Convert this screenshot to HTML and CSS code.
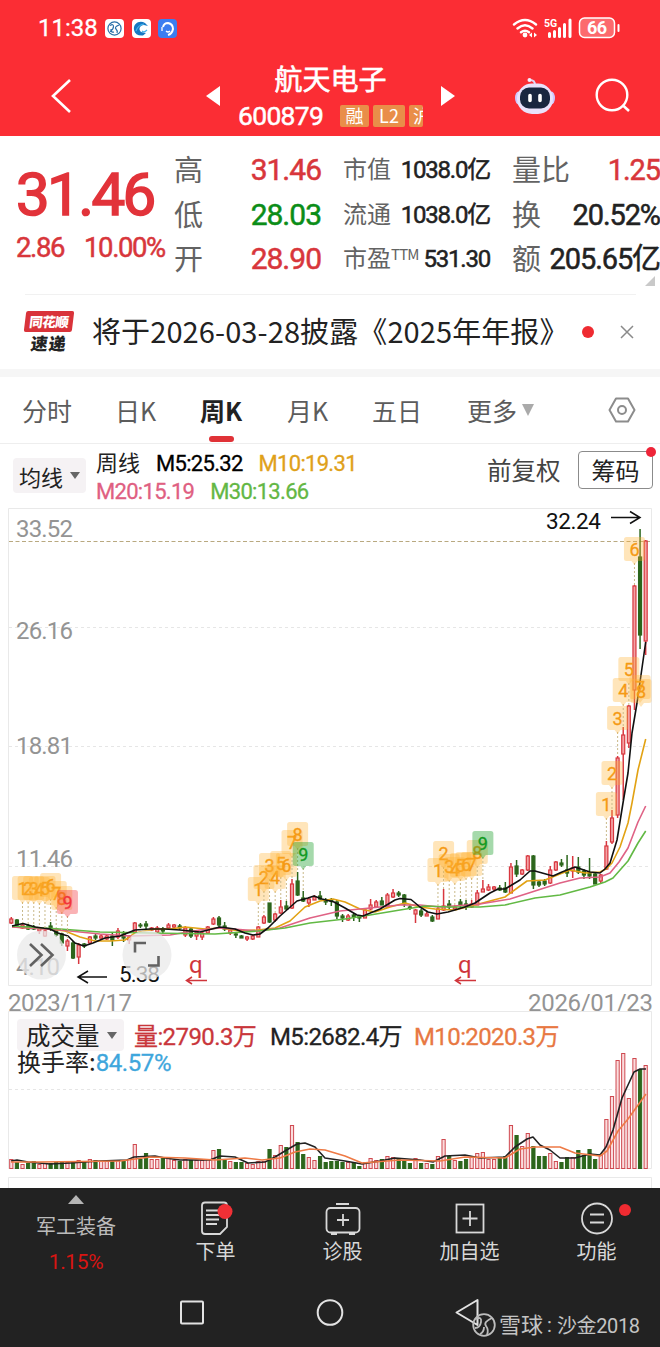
FILE: index.html
```html
<!DOCTYPE html>
<html lang="zh-CN">
<head>
  <meta charset="UTF-8" />
  <meta name="viewport" content="width=device-width, initial-scale=1.0"/>
  <title>航天电子 600879</title>
  <link rel="stylesheet" href="styles.css">
</head>
<body>
  <header class="top">
    <div class="status">
      <span class="clock">11:38</span>
      <svg class="app" viewBox="0 0 19 19"><rect width="19" height="19" rx="4" fill="#fff"/><g fill="none" stroke="#286fa8" stroke-width="1.2"><circle cx="9.5" cy="9.5" r="6.6"/><path d="M5 6.500q3.500-2 3.500 1t-3.500 5M14 6q-5 2-3 4t1 4M9 13q-3 1-3-3"/></g></svg>
      <svg class="app" viewBox="0 0 19 19"><rect width="19" height="19" rx="4" fill="#fff"/><path d="M2 11C1 4 8 1 13 4l3 3-4-1c-4 0-6 4-3 7l5 1-3 2.500C6 17 3 15 2 11z" fill="#1778c2"/><path d="M4 12q2-6 8-7M10 12q2 2 5-1" fill="none" stroke="#45b4ec" stroke-width="1.200"/></svg>
      <svg class="app" viewBox="0 0 19 19"><rect width="19" height="19" rx="4" fill="#3c7df0"/><path d="M5 8q1-4 5-4 5 1 5 6-1 5-5 6" fill="none" stroke="#fff" stroke-width="2"/><path d="M4 8v4M8 12q2 2 4 0" fill="none" stroke="#fff" stroke-width="1.300"/></svg>
      <svg class="signals" viewBox="0 0 110 24">
        <g fill="none" stroke="#fff" stroke-width="2.400" stroke-linecap="round"><path d="M2 8.500Q13-.5 24 8.500M5.500 12.500Q13 6 20.500 12.500M9 16.200q4-3 8 0"/></g>
        <circle cx="13" cy="19" r="2.400" fill="#fff"/>
        <path d="M20 16.500v5l-3-2.500zM22 16.500v5l3-2.500z" fill="#fff"/>
        <text x="32" y="10.500" class="net">5G</text>
        <path d="M37.500 20.500v-3M42.500 20.500v-5M47.500 20.500v-8M52.500 20.500V8.500M58 20.500V4" stroke="#fff" stroke-width="3" stroke-linecap="round"/>
        <rect x="67.500" y="2" width="35" height="19.500" rx="5" fill="#fc6a6e" stroke="#fff" stroke-width="1.500"/>
        <path d="M106.500 9v6" stroke="#fff" stroke-width="2" stroke-linecap="round"/>
        <text x="75" y="18" class="level" textLength="20">66</text>
      </svg>
    </div>
    <div class="nav">
      <svg class="back" viewBox="0 0 22 36"><path d="M20 2L3 18l17 16" fill="none" stroke="#fff" stroke-width="2.600"/></svg>
      <i class="prev"></i>
      <div class="stock">
        <h1>航天电子</h1>
        <div class="code-row">
          <span class="code num">600879</span>
          <span class="tag">融</span><span class="tag l2">L2</span><span class="tag cut">沪</span>
        </div>
      </div>
      <i class="next"></i>
      <svg class="robot" viewBox="0 0 42 38">
        <path d="M21 8q0-5-5-5" fill="none" stroke="#ddd6f5" stroke-width="2"/><circle cx="15.500" cy="3" r="2" fill="#f5eeff"/>
        <ellipse cx="4.500" cy="21" rx="3.500" ry="6.500" fill="#cfc6ff"/><ellipse cx="37.500" cy="21" rx="3.500" ry="6.500" fill="#cfc6ff"/>
        <rect x="3" y="6.500" width="36" height="30.500" rx="15" fill="#e9e2fb"/>
        <rect x="6" y="10.500" width="30" height="21" rx="9" fill="#19263f"/>
        <path d="M16 18.500v5M26 18.500v5" stroke="#fff" stroke-width="3.600" stroke-linecap="round"/>
      </svg>
      <svg class="search" viewBox="0 0 36 36"><circle cx="17" cy="17" r="15.300" fill="none" stroke="#fff" stroke-width="2.400"/><path d="M27.500 27l6.500 6" stroke="#fff" stroke-width="2.600"/></svg>
    </div>
  </header>

  <section class="quote">
    <div class="price up">
      <div class="last num">31.46</div>
      <div class="change num"><span>2.86</span><span>10.00%</span></div>
    </div>
    <dl class="col range">
      <div><dt>高</dt><dd class="num up">31.46</dd></div>
      <div><dt>低</dt><dd class="num down">28.03</dd></div>
      <div><dt>开</dt><dd class="num up">28.90</dd></div>
    </dl>
    <dl class="col cap">
      <div><dt>市值</dt><dd class="num">1038.0亿</dd></div>
      <div><dt>流通</dt><dd class="num">1038.0亿</dd></div>
      <div><dt>市盈<sup>TTM</sup></dt><dd class="num">531.30</dd></div>
    </dl>
    <dl class="col deal">
      <div><dt>量比</dt><dd class="num up">1.25</dd></div>
      <div><dt>换</dt><dd class="num">20.52%</dd></div>
      <div><dt>额</dt><dd class="num">205.65亿</dd></div>
    </dl>
    <i class="corner"></i>
  </section>

  <section class="notice">
    <div class="express"><b>同花顺</b><em>速递</em></div>
    <p>将于2026-03-28披露《2025年年报》</p>
    <i class="dot"></i>
    <svg class="close" viewBox="0 0 14 14"><path d="M1 1l12 12M13 1L1 13" stroke="#8a8a8a" stroke-width="1.500"/></svg>
  </section>

  <nav class="tabs">
    <span class="t1">分时</span>
    <span class="t2">日K</span>
    <span class="t3 active">周K</span>
    <span class="t4">月K</span>
    <span class="t5">五日</span>
    <span class="t6">更多<i class="caret light"></i></span>
    <svg class="gear" viewBox="0 0 28 28"><path d="M8 2.500h12L26.500 14 20 25.500H8L1.500 14z" fill="none" stroke="#8c8c8c" stroke-width="2" stroke-linejoin="round"/><circle cx="14" cy="14" r="4" fill="none" stroke="#8c8c8c" stroke-width="2"/></svg>
  </nav>

  <section class="ma">
    <div class="picker">均线<i class="caret"></i></div>
    <div class="ma-list">
      <div><span class="period">周线</span><span class="m5">M5:25.32</span><span class="m10">M10:19.31</span></div>
      <div><span class="m20">M20:15.19</span><span class="m30">M30:13.66</span></div>
    </div>
    <span class="adjust">前复权</span>
    <div class="chips">筹码</div>
  </section>

  <svg class="kline" viewBox="0 508 660 504">
    <path class="frame" d="M8.500 508.500h643v477H8.500z"/>
    <path class="grid" d="M9 627.500h642M9 746.500h642M9 866.500h642"/>
    <path class="now" d="M9 541.500h642"/>
    <g class="axis">
      <text x="16" y="537" textLength="57">33.52</text>
      <text x="16" y="639" textLength="57">26.16</text>
      <text x="16" y="753.500" textLength="57">18.81</text>
      <text x="16" y="867" textLength="57">11.46</text>
      <text x="16" y="974.500" textLength="44">4.10</text>
      <text x="8" y="1011" textLength="124">2023/11/17</text>
      <text x="528" y="1011" textLength="125">2026/01/23</text>
    </g>
    <g id="candles"></g>
    <g id="lines" class="lines"></g>
    <g id="badges"></g>
    <g class="mark">
      <text x="546" y="529" textLength="55">32.24</text>
      <path d="M611 517.500h29M630 511.500l10 6-10 6"/>
      <text x="119" y="982" textLength="41">5.38</text>
      <path d="M107 977H78M88 971l-10 6 10 6"/>
    </g>
    <g class="ex">
      <text x="189" y="973">q</text><path d="M207 980.500h-20M192 977l-5.500 3.500 5.500 3.500"/>
      <text x="458" y="973">q</text><path d="M476 980.500h-20M461 977l-5.500 3.500 5.500 3.500"/>
    </g>
    <circle class="float" cx="41.500" cy="955" r="24.500"/>
    <circle class="float" cx="147" cy="955" r="24.500"/>
    <path class="float-icon" d="M30 944l11.500 11L30 966M41 944l11.500 11L41 966"/>
    <path class="float-icon" d="M135 952.500v-9.500h11M158.500 956v9.500h-10.500"/>
  </svg>

  <section class="volume">
    <div class="vol-head">
      <div class="vol-row"><span class="picker wide">成交量<i class="caret"></i></span><span class="v1">量:2790.3万</span><span class="v2">M5:2682.4万</span><span class="v3">M10:2020.3万</span></div>
      <div class="turnover">换手率:<span>84.57%</span></div>
    </div>
    <svg class="vol-chart" viewBox="0 1011 660 177">
      <path class="frame" d="M8.500 1011.500h643v157H8.500zM8.500 1188v-10.500h643v10.500"/>
      <path class="grid" d="M9 1089.500h642"/>
      <g id="bars"></g>
      <g id="volLines" class="lines"></g>
    </svg>
  </section>

  <footer class="bottom">
    <div class="actions">
      <div class="item sector"><i class="tri-up"></i><span>军工装备</span><b>1.15%</b></div>
      <div class="item i2">
        <svg viewBox="0 0 36 36"><path d="M7 2.500h19q3 0 3 3V27l-7 7H7q-3 0-3-3V5.500q0-3 3-3z"/><path d="M8 10.500h12M8 15h13M8 19.500h13M8 24h11"/><circle class="red" cx="27" cy="11.500" r="7.500"/></svg>
        <span>下单</span>
      </div>
      <div class="item i3">
        <svg viewBox="0 0 36 36"><rect x="1.500" y="8" width="33" height="24.500" rx="4"/><path d="M11 4h13M18 14v12M12 20h12M6 34h6M24 34h6"/></svg>
        <span>诊股</span>
      </div>
      <div class="item i4">
        <svg viewBox="0 0 36 36"><rect x="4.500" y="4.500" width="27" height="28"/><path d="M18 11v15M10.500 18.500h15"/></svg>
        <span>加自选</span>
      </div>
      <div class="item i5">
        <svg viewBox="0 0 36 36"><circle cx="18" cy="18.500" r="15"/><path d="M11 14.500h14M11 22.500h14"/></svg>
        <span>功能</span>
        <i class="dot"></i>
      </div>
    </div>
    <div class="keys">
      <svg viewBox="0 0 660 50">
        <g fill="none" stroke="#e2e2e2" stroke-width="2"><rect x="181" y="13.500" width="22" height="22" rx="1"/><circle cx="330" cy="24.500" r="12.300"/><path d="M477.500 12v25L456.500 24.500z" stroke-linejoin="round"/></g>
        <g fill="none" stroke="#bdbdbd" stroke-width="1.800"><circle cx="484" cy="37" r="10.800"/><path d="M476 31q6-3 5 3t-6 6M492 30q-9 4-6 8t1 9M480 46q4-2 4-7"/></g>
        <text x="499" y="45" class="mark-text big">雪球</text>
        <text x="547" y="44" class="mark-text">:</text>
        <text x="557" y="45" class="mark-text" textLength="83">沙金2018</text>
      </svg>
    </div>
  </footer>

  <script src="chart.js"></script>
</body>
</html>
```
FILE: chart.js
```js
const STEP = 5.614;
const X0 = 11.3;
const RED = '#d8373f';
const GREEN = '#2c661c';

// colour, high, body top, body bottom, low
const candles = [
  ['r',917,919,923,924],['g',919,920,925,926],['r',923,925,928,929],['g',924,926,929,930],['g',925,927,929,930],
  ['r',927,928,931,934],['r',928,931,936,937],['g',922,926,929,931],['g',928,929,935,937],['g',933,934,943,946],
  ['r',939,941,946,951],['g',941,943,958,959],['r',943,945,957,964],['g',943,944,946,948],['r',936,937,943,944],
  ['g',934,936,938,940],['r',934,936,938,939],['r',935,936,939,940],['g',933,936,940,946],['r',928,931,937,939],
  ['g',931,934,938,942],['r',935,937,940,944],['r',922,923,932,933],['g',923,925,926,928],['g',921,924,926,929],
  ['r',927,928,930,931],['r',926,928,932,934],['g',927,929,931,934],['r',923,925,928,929],['r',924,925,927,928],
  ['g',924,926,928,930],['r',926,928,935,937],['g',927,929,936,938],['r',930,932,936,940],['r',931,933,937,940],
  ['r',926,927,933,934],['r',917,919,924,925],['g',916,918,925,927],['g',922,926,929,931],
  ['r',928,930,933,935],['g',932,934,935,938],['g',935,936,938,938],['r',936,937,939,941],['r',935,936,939,940],
  ['r',926,927,937,937],['r',915,917,923,924],['g',903,903,922,923],['r',913,914,920,922],['r',900,907,913,914],
  ['g',901,906,909,910],['r',879,884,908,909],['g',872,881,895,896],['g',891,898,901,902],['r',898,899,903,907],
  ['r',895,897,900,900],['g',891,896,899,900],['g',898,900,902,905],['g',898,900,901,906],['g',900,902,916,919],
  ['g',914,916,918,922],['r',914,916,920,921],['g',913,915,917,921],['g',915,916,918,922],['r',909,910,918,918],
  ['r',899,905,909,910],['r',900,902,907,908],['g',897,901,905,905],['r',893,895,907,907],['r',889,893,897,898],
  ['g',891,893,895,897],['g',894,895,904,907],['g',905,907,908,910],['r',909,910,914,923],['g',909,911,915,917],
  ['r',912,914,916,916],['g',915,917,921,922],
  ['r',907,909,919,919],['r',889,906,910,911],['g',900,904,907,909],['r',905,907,909,910],['g',899,902,905,908],
  ['g',900,904,907,910],['r',900,904,907,908],['r',890,893,905,905],['r',880,889,892,892],['r',884,887,890,891],
  ['r',886,887,889,891],['g',885,888,890,891],['g',882,888,892,893],['r',863,867,893,893],['g',860,866,874,877],
  ['r',869,870,874,875],['r',855,856,870,871],['g',855,856,885,889],['g',880,882,885,887],['g',879,881,884,886],
  ['r',866,870,883,884],['r',861,862,870,871],['g',859,863,865,867],['g',855,870,873,877],['r',856,868,871,878],
  ['g',857,867,872,874],['g',869,871,875,879],['g',858,873,876,879],['g',872,874,884,884],
  ['r',874,875,881,883],['r',841,846,869,870],['r',810,818,842,844],['r',756,758,815,818],['r',727,735,754,800],
  ['r',705,706,743,748],['r',585,586,690,710],['g',529,557,635,649],['r',540,541,641,655]
];

// bar heights
const volumes = [
  9,6,4,5,7,4,5,5,6,6,6,7,8,6,9,8,7,7,7,8,8,9,24,9,15,9,9,11,11,8,7,9,8,8,8,9,18,19,8,7,6,6,5,4,7,7,19,13,23,21,43,26,
  14,11,8,12,6,7,7,6,6,5,2,6,10,8,9,12,11,9,8,5,10,5,5,4,12,29,12,8,7,9,11,15,16,9,9,10,12,43,33,22,35,22,12,12,15,
  7,6,11,11,18,13,19,9,13,49,72,108,115,70,110,99,103
];

const maLines = [
  ['#e2a213', '12,927 50,929 65,931 80,937 95,941 110,941 125,940 135,933 155,929 170,929 185,927 205,929 220,928 240,931 258,930 275,928 290,921 305,907 320,901 333,899 345,902 360,909 375,912 390,907 405,903 420,907 435,909 455,910 475,905 490,901 505,897 527,881 545,880 570,870 585,873 600,872 606,869 612,863 620,847 628,823 632,803 638,770 645.7,739'],
  ['#df6285', '12,927 60,930 100,934 130,936 170,935 200,930 220,928 258,931 280,928 310,918 340,911 370,908 400,905 420,905 440,907 480,904 510,899 535,891 560,883 580,878 600,877 610,873 619,862 628,848 638,822 645.7,806'],
  ['#62b944', '12,926 60,929 100,932 150,933 215,934 258,931 285,928 310,923 345,919 370,915 400,910 425,906 450,907 480,907 505,905 535,898 560,895 590,887 605,882 613,878 628,861 638,843 645.7,831'],
  ['#111', '12,926 23,923.5 35,927 50,929 58,933 68,936 75,943 84,946 93,943 105,938 120,936 135,930 150,929 165,929 180,930 200,932 220,927 235,929 245,933 253,935 260,934 268,928 280,916 297,901 308,898 314,896 322,899 334,902 345,908 357,915 363,916 380,909 395,900 400,898.5 411,899.5 420,907 428,912 437,914 448,912 465,907 475,903 490,893 498,889 505,889 520,880 530,871 535,871 553,876 562,872 575,867 590,872 600,873 605,869 610,863 617,840 623,803 628,773 632,733 637,703 645.7,642']
];

const volMa = [
  ['#222', '11,1161 17,1160 28,1162 50,1164 70,1163 100,1161 127,1160 134,1157 155,1156 165,1158 180,1160 210,1160 220,1156 235,1157 248,1163 265,1162 275,1157 290,1148 297,1144 305,1143 315,1147 325,1158 345,1161 362,1164 380,1161 395,1158 420,1160 433,1162 445,1156 465,1155 480,1158 505,1157 515,1147 527,1139 533,1137 540,1145 550,1150 560,1158 575,1158 590,1154 600,1155 606,1147 613,1130 622,1098 634,1072 640,1069 646,1069'],
  ['#ee7a45', '11,1162 40,1162 120,1161 150,1157 185,1158 215,1160 245,1158 262,1160 280,1158 295,1152 310,1149 325,1150 345,1156 362,1163 400,1160 440,1161 465,1157 505,1158 520,1149 535,1147 560,1147 575,1153 600,1156 607,1151 618,1131 628,1119 646,1094']
];

// nine-turn markers: first candle, centre of each number, colour of the ninth
const turns = [
  [2, [888,888,888,889,888,885,893,898,902], '#f2343c'],
  [44, [889,877,865,877,863,865,842,834,854], '#129a22'],
  [76, [870,853,866,869,865,864,864,852,843], '#129a22'],
  [106, [804,773,718,690,669,549,687,691], '']
];

const cx = i => X0 + STEP * i;

document.getElementById('candles').innerHTML = candles.map(([c, hi, top, bot, lo], i) => {
  const x = cx(i);
  const color = c === 'r' ? RED : GREEN;
  const fill = c === 'r' ? '#f3a2a5' : GREEN;
  return `<path d="M${x} ${hi}V${lo}" stroke="${color}" stroke-width="1.5"/>` +
    `<rect x="${x - 1.5}" y="${top}" width="3" height="${bot - top}" fill="${fill}" stroke="${color}" stroke-width="1.2"/>`;
}).join('');

document.getElementById('bars').innerHTML = volumes.map((h, i) => {
  const red = candles[i][0] === 'r';
  return `<rect x="${cx(i) - 1.6}" y="${1168.5 - h}" width="3.2" height="${h}" fill="${red ? '#fbdcdd' : GREEN}" stroke="${red ? '#cf4950' : GREEN}" stroke-width="1"/>`;
}).join('');

const draw = list => list.map(([c, p]) => `<polyline points="${p}" stroke="${c}"/>`).join('');
document.getElementById('lines').innerHTML = draw(maLines);
document.getElementById('volLines').innerHTML = draw(volMa);

let badges = '';
turns.forEach(([start, ys, last]) => ys.forEach((y, n) => {
  // the newest marker is kept inside the frame
  const x = Math.min(cx(start + n), 641);
  const color = n === 8 ? last : '#f59a14';
  const bg = n === 8 ? last : '#ffb236';
  const end = candles[start + n][1];
  if (end > y + 14) badges += `<path class="stem" d="M${x} ${y + 14}V${end}"/>`;
  badges += `<path d="M${x - 8} ${y - 12}h16q2.500 0 2.500 2.500v19q0 2.500-2.500 2.500h-5l-3 4-3-4h-5q-2.500 0-2.500-2.500v-19q0-2.500 2.500-2.500z" fill="${bg}" opacity="${n === 8 ? 0.38 : 0.34}"/>` +
    `<text class="digit" x="${x}" y="${y + 6.5}" fill="${color}" stroke="${color}">${n + 1}</text>`;
}));
document.getElementById('badges').innerHTML = badges;
```
FILE: styles.css
```css
* {
  box-sizing: border-box;
}

body {
  margin: 0;
  width: 660px;
  background: #fff;
  color: #222;
  font-family: "Noto Sans CJK SC", "Noto Sans", sans-serif;
}

svg {
  display: block;
  flex: none;
}

i, em {
  font-style: normal;
}

.num, .clock, .ma-list, .turnover span, .v1, .v2, .v3, .sector b, svg text {
  font-family: Roboto, "Noto Sans CJK SC", sans-serif;
}

.num {
  -webkit-text-stroke: 0.5px currentColor;
}

.up {
  color: #d8363b;
}

.down {
  color: #0b8d17;
}

/* header */
.top {
  height: 136px;
  background: #fb2d34;
  color: #fff;
}

.status {
  display: flex;
  align-items: center;
  height: 56px;
  padding-left: 38px;
}

.clock {
  width: 67px;
  font-size: 24px;
  line-height: 30px;
  -webkit-text-stroke: 0.3px #fff;
}

.app {
  width: 19px;
  height: 19px;
  margin-right: 7.5px;
}

.signals {
  width: 110px;
  height: 24px;
  margin-left: 327px;
}

.net {
  fill: #fff;
  font-size: 10.5px;
  font-weight: bold;
}

.level {
  fill: #fff;
  font-size: 18px;
  font-weight: bold;
}

.nav {
  display: flex;
  align-items: center;
  height: 80px;
  padding-left: 50px;
}

.back {
  width: 22px;
  height: 36px;
}

.prev, .next {
  border: 10px solid transparent;
}

.prev {
  border-right: 14px solid #fff;
  border-left: 0;
  margin-left: 134px;
}

.next {
  border-left: 14px solid #fff;
  border-right: 0;
  margin-left: 18px;
}

.stock {
  width: 185px;
  margin: 1px 0 0 18px;
}

h1 {
  margin: 0;
  font-size: 28px;
  font-weight: 400;
  line-height: 39px;
  text-align: center;
  -webkit-text-stroke: 0.6px #fff;
}

.code-row {
  display: flex;
  align-items: center;
  height: 36px;
}

.code {
  width: 102px;
  font-size: 26.5px;
  line-height: 30px;
  letter-spacing: -0.7px;
}

.tag {
  width: 29px;
  height: 22px;
  margin-right: 4px;
  border-radius: 2px;
  background: #e98e49;
  font-size: 18px;
  line-height: 20px;
  text-align: center;
  overflow: hidden;
}

.l2 {
  width: 32px;
}

.cut {
  width: 14px;
  margin-right: 0;
  padding-left: 4px;
  text-align: left;
}

.robot {
  width: 42px;
  height: 38px;
  margin-left: 59px;
}

.search {
  width: 36px;
  height: 36px;
  margin-left: 39px;
}

/* quote */
.quote {
  display: flex;
  position: relative;
  height: 158px;
  padding-top: 11px;
}

.price {
  width: 174px;
  padding-left: 16px;
}

.last {
  height: 84px;
  color: #e2333a;
  font-size: 60px;
  line-height: 95px;
  letter-spacing: -2.6px;
  -webkit-text-stroke-width: 1.6px;
}

.change {
  display: flex;
  gap: 20px;
  margin-top: 1px;
  font-size: 27.5px;
  line-height: 31px;
  letter-spacing: -1.4px;
}

.col {
  margin: 0;
  line-height: 44.5px;
  white-space: nowrap;
}

.col div {
  display: flex;
  justify-content: space-between;
  height: 44.5px;
}

.col dt {
  color: #636363;
  font-size: 29px;
  margin-top: -1px;
}

.col dd {
  margin: 1px 0 0;
  font-size: 30px;
  letter-spacing: -1px;
}

.range {
  width: 147px;
}

.cap {
  width: 147px;
  margin-left: 22px;
}

.cap dt {
  font-size: 24px;
}

.cap dd {
  font-size: 24px;
  letter-spacing: -1.2px;
}

.cap sup {
  font-size: 15px;
  line-height: 0;
  vertical-align: 7px;
  letter-spacing: -0.8px;
}

.deal {
  width: 148px;
  margin-left: 22px;
}

.deal dd {
  font-size: 29px;
  letter-spacing: -1.1px;
}

.corner {
  position: absolute;
  right: 5px;
  top: 140px;
  border-left: 10px solid transparent;
  border-bottom: 10px solid #c9c9c9;
}

/* notice */
.notice {
  display: flex;
  align-items: center;
  height: 83px;
  padding-left: 25px;
  border-bottom: 8px solid #f6f6f6;
  background: linear-gradient(#f1f1f1, #f1f1f1) 25px 0 / 611px 1px no-repeat;
}

.express {
  width: 67px;
}

.express b, .express em {
  display: block;
  width: 48px;
  text-align: center;
  transform: skewX(-7deg);
}

.express b {
  height: 21px;
  border-radius: 2px;
  background: #d9333a;
  color: #fff;
  font-size: 13.5px;
  line-height: 20px;
  font-weight: 900;
  letter-spacing: -0.5px;
}

.express em {
  height: 20px;
  font-size: 17px;
  font-weight: 900;
  line-height: 21px;
  letter-spacing: 1px;
}

.notice p {
  margin: -3px 0 0;
  width: 490px;
  font-size: 29px;
  line-height: 40px;
  letter-spacing: 0.1px;
  white-space: nowrap;
}

.dot {
  width: 12px;
  height: 12px;
  border-radius: 50%;
  background: #ef2b31;
}

.close {
  width: 14px;
  height: 14px;
  margin-left: 26px;
}

/* tabs */
.tabs {
  display: flex;
  align-items: center;
  height: 67px;
  padding-left: 22px;
  border-bottom: 1px solid #eee;
  color: #5c5c5c;
  font-size: 25px;
  line-height: 66px;
}

.tabs span {
  height: 66px;
}

.t1 { width: 93px; }
.t2 { width: 85px; }
.t3 { width: 87px; }
.t4 { width: 85px; }
.t5 { width: 95px; }

.t6 {
  display: flex;
  align-items: center;
  width: 141px;
}

.active {
  color: #222;
  font-weight: bold;
}

.active::after {
  content: "";
  display: block;
  width: 25px;
  height: 6px;
  margin: -7px 0 0 9px;
  border-radius: 3px;
  background: #e03237;
}

.gear {
  width: 28px;
  height: 28px;
}

.caret {
  display: inline-block;
  margin-left: 7px;
  border: 5px solid transparent;
  border-top: 7px solid #666;
  border-bottom: 0;
}

.light {
  border-width: 12px 6px 0;
  border-top-color: #aaa;
  margin-left: 5px;
}

/* moving averages */
.ma {
  display: flex;
  height: 64px;
  padding-left: 13px;
}

.picker {
  display: flex;
  align-items: center;
  width: 73px;
  height: 35px;
  margin-top: 14px;
  padding-left: 6px;
  border-radius: 4px;
  background: #f5f2f4;
  font-size: 22px;
  line-height: 30px;
}

.ma-list {
  width: 392px;
  padding: 6px 0 0 10px;
  font-size: 22px;
  line-height: 28px;
  letter-spacing: -0.7px;
  -webkit-text-stroke: 0.3px currentColor;
}

.ma-list span {
  margin-right: 16px;
}

.m5 { color: #000; }
.m10 { color: #dfa11a; }
.m20 { color: #df5f82; }
.m30 { color: #63b744; }

.ma-list .period {
  letter-spacing: 0;
  -webkit-text-stroke: 0;
}

.adjust {
  width: 100px;
  padding-left: 9px;
  color: #444;
  font-size: 24.5px;
  line-height: 51px;
}

.chips {
  position: relative;
  width: 75px;
  height: 38px;
  margin-top: 7px;
  border: 1px solid #8b8b8b;
  border-radius: 4px;
  font-size: 24px;
  line-height: 35px;
  text-align: center;
}

.chips::after {
  content: "";
  position: absolute;
  top: -5px;
  right: -4px;
  width: 10px;
  height: 10px;
  border-radius: 50%;
  background: #ee2438;
}

/* charts */
.kline {
  width: 660px;
  height: 504px;
}

.frame {
  fill: none;
  stroke: #e9e9e9;
}

.grid {
  stroke: #e6e6e6;
  stroke-dasharray: 3 3;
}

.now {
  stroke: #b9a980;
  stroke-dasharray: 4 2.5;
}

.axis text {
  fill: #949494;
  font-size: 24px;
}

.lines {
  fill: none;
  stroke-width: 1.6;
  stroke-linejoin: round;
}

.stem {
  stroke: #c9b98a;
  stroke-dasharray: 2 2;
}

.digit {
  font-size: 18px;
  text-anchor: middle;
  stroke-width: 0.3;
}

.mark text {
  font-size: 22.5px;
  fill: #111;
}

.mark path {
  fill: none;
  stroke: #111;
  stroke-width: 1.5;
}

.ex text {
  fill: #d0353b;
  font-size: 24px;
}

.ex path {
  fill: none;
  stroke: #d0353b;
  stroke-width: 1.5;
}

.float {
  fill: #e9e9e9;
  opacity: 0.75;
}

.float-icon {
  fill: none;
  stroke: #626262;
  stroke-width: 2.6;
}

.volume {
  display: grid;
  height: 176px;
}

.vol-head, .vol-chart {
  grid-area: 1 / 1;
}

.vol-chart {
  width: 660px;
  height: 177px;
  margin-top: -1px;
}

.vol-head {
  padding: 7px 0 0 17px;
  font-size: 24px;
}

.vol-row {
  display: flex;
  height: 32px;
  line-height: 36px;
  letter-spacing: -0.6px;
}

.vol-row > span:not(.picker) {
  -webkit-text-stroke: 0.3px currentColor;
}

.wide {
  width: 107px;
  height: 32px;
  margin: 0 10px 0 0;
  padding-left: 9px;
  font-size: 24.5px;
  letter-spacing: 0;
}

.v1 { width: 136px; color: #c9363b; }
.v2 { width: 144px; }
.v3 { color: #e87842; }

.turnover {
  margin-top: -6px;
  line-height: 32px;
}

.turnover span {
  color: #3ea6dc;
  letter-spacing: -0.4px;
  -webkit-text-stroke: 0.3px currentColor;
}

/* bottom bar */
.bottom {
  height: 159px;
  background: #222;
  color: #d8d8d8;
}

.actions {
  display: flex;
  height: 100px;
}

.item {
  position: relative;
  display: flex;
  flex-direction: column;
  align-items: center;
  width: 127px;
  padding-top: 12px;
  font-size: 20px;
  line-height: 28px;
}

.item svg {
  width: 36px;
  height: 36px;
  fill: none;
  stroke: #d8d8d8;
  stroke-width: 1.8;
}

.item .red {
  fill: #f03036;
  stroke: none;
}

.item span {
  margin-top: 1px;
}

.sector {
  width: 152px;
  padding-top: 7px;
  color: #bbb;
}

.sector span {
  margin-top: 8px;
}

.sector b {
  margin-top: 8px;
  color: #d81512;
  font-weight: normal;
  font-size: 21px;
  letter-spacing: -0.4px;
}

.tri-up {
  border: 8px solid transparent;
  border-bottom: 9px solid #b5b5b5;
  border-top: 0;
}

.item .dot {
  position: absolute;
  left: 86px;
  top: 16px;
}

.keys svg {
  width: 660px;
  height: 50px;
}

.mark-text {
  fill: #c4c4c4;
  font-size: 20px;
}

.big {
  font-size: 22px;
}
```
